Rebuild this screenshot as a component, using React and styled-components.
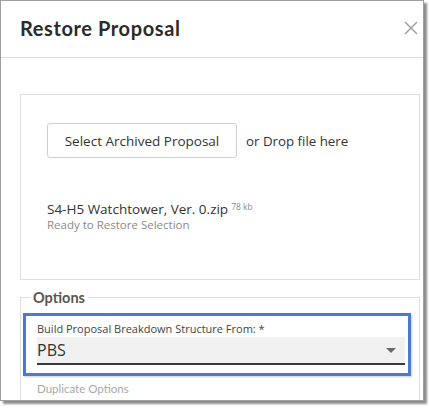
import React from "react";
import styled, { createGlobalStyle } from "styled-components";

const Global = createGlobalStyle`
  html, body { margin: 0; padding: 0; background: #ffffff; }
  body { width: 430px; height: 408px; overflow: hidden; font-family: "Open Sans", "Noto Sans", sans-serif; }
  * { box-sizing: border-box; }
`;

const Dialog = styled.div`
  width: 424px;
  height: 401px;
  border: 1px solid #9e9e9e;
  background: #ffffff;
  box-shadow: 3px 3px 2px rgba(0, 0, 0, 0.45);
  overflow: hidden;
  display: flex;
  flex-direction: column;
`;

const Header = styled.div`
  height: 57px;
  flex: none;
  border-bottom: 1px solid #dcdcdc;
  display: flex;
  align-items: center;
  justify-content: space-between;
  padding: 0 4px 2px 19px;
`;

const Title = styled.h1`
  margin: 0;
  font-family: "Lato", "Open Sans", sans-serif;
  font-weight: 700;
  font-size: 20px;
  letter-spacing: 0.6px;
  color: #2b2b2b;
`;

const Close = styled.button`
  border: 0;
  background: none;
  padding: 0;
  width: 16px;
  height: 16px;
  display: flex;
  color: #9a9a9a;
`;

const Body = styled.div`
  padding: 36px 3px 0 19px;
  display: flex;
  flex-direction: column;
`;

const DropZone = styled.div`
  height: 186px;
  border: 1px solid #dedede;
  padding: 28px 26px 0;
`;

const ButtonRow = styled.div`
  display: flex;
  align-items: center;
  gap: 9px;
`;

const SelectButton = styled.button`
  width: 190px;
  height: 35px;
  border: 1px solid #cfcfcf;
  border-radius: 3px;
  background: #ffffff;
  font-family: "Open Sans", sans-serif;
  font-size: 13.5px;
  color: #333333;
  padding: 0;
`;

const Hint = styled.span`
  font-size: 13.3px;
  color: #333333;
`;

const FileInfo = styled.div`
  margin-top: 40px;
  display: flex;
  flex-direction: column;
`;

const FileName = styled.div`
  font-size: 13.5px;
  color: #333333;
  line-height: 18px;
`;

const FileSize = styled.span`
  font-size: 8.5px;
  color: #8a8a8a;
  margin-left: 3px;
  vertical-align: 4px;
`;

const FileStatus = styled.div`
  font-size: 11.5px;
  color: #8a8a8a;
  line-height: 14px;
`;

const Fieldset = styled.fieldset`
  margin: 9px 0 0;
  padding: 0 0 20px 2px;
  border: 1px solid #dedede;
  min-width: 0;
`;

const Legend = styled.legend`
  margin-left: 8px;
  padding: 0 3px 0 2px;
  font-family: "Lato", "Open Sans", sans-serif;
  font-weight: 700;
  font-size: 14.5px;
  color: #5a5552;
  line-height: 17px;
`;

const FocusBox = styled.div`
  margin-top: 7px;
  width: 388px;
  border: 3px solid #4a7bd0;
  box-shadow: 1px 1px 2px rgba(0, 0, 0, 0.2);
  padding: 5px 3px 8px 11px;
`;

const FieldLabel = styled.div`
  font-size: 11px;
  color: #444444;
  line-height: 15px;
  margin-bottom: 1px;
`;

const SelectField = styled.div`
  height: 28px;
  background: #f1f1f1;
  border-bottom: 2px solid #383845;
  display: flex;
  align-items: center;
  justify-content: space-between;
  padding: 0 9px 0 0;
`;

const SelectValue = styled.span`
  font-size: 16px;
  color: #333333;
  font-family: "Open Sans", sans-serif;
`;

const Caret = styled.span`
  width: 0;
  height: 0;
  border-left: 5px solid transparent;
  border-right: 5px solid transparent;
  border-top: 5px solid #6a6a6a;
`;

const SubLabel = styled.div`
  margin: 5px 0 0 14px;
  font-size: 11.5px;
  line-height: 15px;
  color: #a8a8a8;
  font-family: "Lato", "Open Sans", sans-serif;
`;

export default function App() {
  return (
    <>
      <Global />
      <Dialog>
        <Header>
          <Title>Restore Proposal</Title>
          <Close aria-label="Close">
            <svg width="16" height="16" viewBox="0 0 16 16">
              <path d="M2 2 L14 14 M14 2 L2 14" stroke="currentColor" strokeWidth="1.4" fill="none" />
            </svg>
          </Close>
        </Header>
        <Body>
          <DropZone>
            <ButtonRow>
              <SelectButton>Select Archived Proposal</SelectButton>
              <Hint>or Drop file here</Hint>
            </ButtonRow>
            <FileInfo>
              <FileName>
                S4-H5 Watchtower, Ver. 0.zip<FileSize>78 kb</FileSize>
              </FileName>
              <FileStatus>Ready to Restore Selection</FileStatus>
            </FileInfo>
          </DropZone>
          <Fieldset>
            <Legend>Options</Legend>
            <FocusBox>
              <FieldLabel>Build Proposal Breakdown Structure From: *</FieldLabel>
              <SelectField>
                <SelectValue>PBS</SelectValue>
                <Caret />
              </SelectField>
            </FocusBox>
            <SubLabel>Duplicate Options</SubLabel>
          </Fieldset>
        </Body>
      </Dialog>
    </>
  );
}
